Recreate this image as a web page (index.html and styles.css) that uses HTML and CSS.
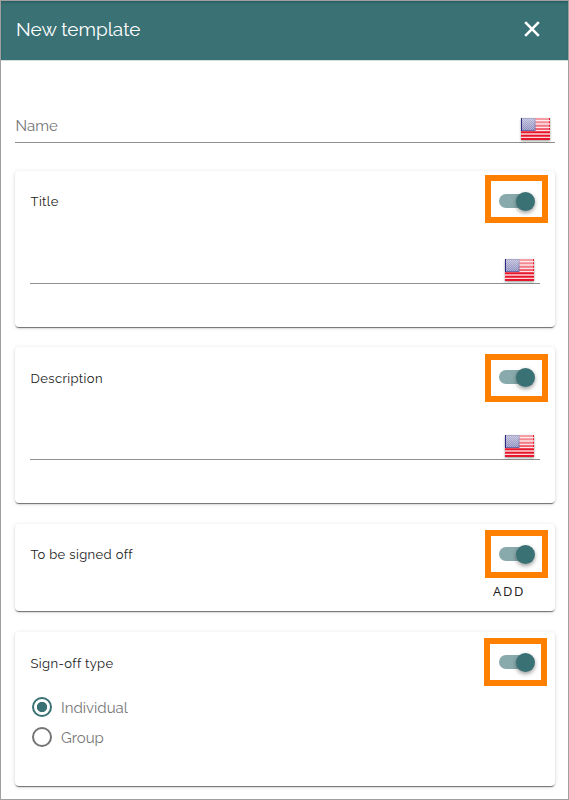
FILE: index.html
```
<!DOCTYPE html>
<html lang="en">
<head>
<meta charset="utf-8">
<title>New template</title>
<link rel="stylesheet" href="styles.css">
</head>
<body>
<svg width="0" height="0" class="defs" aria-hidden="true">
  <defs>
    <linearGradient id="shine" x1="0" y1="0" x2="0" y2="1"><stop offset="0" stop-color="#fff" stop-opacity=".6"/><stop offset=".6" stop-color="#fff" stop-opacity=".3"/><stop offset=".61" stop-color="#fff" stop-opacity="0"/></linearGradient>
    <pattern id="stars" width="2" height="2" patternUnits="userSpaceOnUse"><path fill="#c8c8e8" d="M0 0h1v1H0zM1 1h1v1H1z" opacity=".45"/></pattern>
    <symbol id="flag" viewBox="0 0 29 22">
      <path fill="#fbd5da" d="M0 0h29v22H0z"/>
      <path stroke="#e8162b" stroke-width="2" d="M0 1h29M0 4.3h29M0 7.7h29M0 11h29M0 14.3h29M0 17.7h29M0 21h29"/>
      <path fill="#2b2b85" d="M0 0h14.5v13H0z"/>
      <path fill="#55559f" d="M1 1h12.5v11H1z"/>
      <path fill="url(#stars)" d="M1 1h12.5v11H1z"/>
      <path fill="url(#shine)" d="M1 0h27v21H1z"/>
    </symbol>
  </defs>
</svg>
<div class="dialog">
  <header class="bar">
    <h1>New template</h1>
    <svg class="close" width="16" height="16" viewBox="0 0 16 16"><path d="M1.2 1.2 14.8 14.8M14.8 1.2 1.2 14.8" stroke="#fff" stroke-width="2.6"/></svg>
  </header>
  <main>
    <div class="field name"><label>Name</label><svg class="flag"><use href="#flag"/></svg></div>
    <section class="card tall">
      <div class="head"><h2>Title</h2><span class="toggle first"></span></div>
      <div class="field"><svg class="flag"><use href="#flag"/></svg></div>
    </section>
    <section class="card tall">
      <div class="head"><h2 class="low">Description</h2><span class="toggle second"></span></div>
      <div class="field"><svg class="flag"><use href="#flag"/></svg></div>
    </section>
    <section class="card short">
      <div class="head"><h2>To be signed off</h2><span class="toggle"></span></div>
      <button class="add">ADD</button>
    </section>
    <section class="card type">
      <div class="head"><h2 class="low">Sign-off type</h2><span class="toggle last"></span></div>
      <div class="options">
        <div class="option on"><i></i><span>Individual</span></div>
        <div class="option"><i></i><span>Group</span></div>
      </div>
    </section>
  </main>
</div>
</body>
</html>
```
FILE: styles.css
```
*, *::before, *::after { box-sizing: border-box; }
body { margin: 0; background: #fff; font-family: Raleway, Lato, "Open Sans", sans-serif; }
.defs { position: absolute; }
.dialog { height: 800px; border: 1px solid #a0a0a0; overflow: hidden; }
.bar { height: 60px; display: flex; align-items: center; justify-content: space-between; padding: 0 28px 3px 15px; background: #397175; box-shadow: inset 0 2px 3px -1px #28575a; border-bottom: 1px solid #d5dddd; }
h1 { margin: 0; color: #fff; font-size: 19px; font-weight: 400; }
.close { display: block; }
main { padding: 0 13px 0 14px; }
.field { display: flex; justify-content: flex-end; align-items: flex-start; height: 26px; border-bottom: 1px solid #8f8f8f; padding-right: 5px; }
.name { margin-top: 56px; }
.name label { flex: 1; padding-left: .5px; color: #747474; font-size: 15px; line-height: 18px; }
.flag { width: 29px; height: 22px; margin: 1px 1px 0 0; filter: drop-shadow(0 1px 1px rgba(0,0,0,.4)); }
.name .flag { margin-right: 0; }
.card { border-radius: 4px; padding: 21px 15px 0; background: #fff; box-shadow: 0 2px 1px -1px rgba(0,0,0,.4), 0 1px 1px rgba(0,0,0,.2), 0 1px 4px rgba(0,0,0,.15); }
.tall { height: 156px; margin-bottom: 20px; }
.name + .card { margin-top: 28px; }
.tall .field { margin-top: 46px; }
.short { height: 87px; margin: 21px 0; }
.type { height: 154px; }
.head { position: relative; display: flex; justify-content: space-between; align-items: flex-start; height: 20px; padding-right: 5px; }
h2 { margin: 0; padding-left: .6px; color: #222; font-size: 13px; font-weight: 400; line-height: 20px; letter-spacing: .37px; }
.low { padding-top: 1px; }
.toggle { position: relative; width: 36px; height: 19px; display: flex; align-items: center; justify-content: flex-end; }
.toggle::before { content: ""; position: absolute; left: 0; top: 2px; width: 34px; height: 14px; border-radius: 7px; background: #88aaac; }
.toggle::after { content: ""; position: relative; width: 19px; height: 19px; border-radius: 50%; background: #397175; box-shadow: 0 2px 4px rgba(0,0,0,.4); }
.head::after { content: ""; position: absolute; right: -8px; top: -15px; width: 63px; height: 48px; border: 6px solid #ff8000; }
.head:has(.first)::after { top: -17px; }
.head:has(.second)::after { top: -14px; }
.head:has(.last)::after { right: -7px; }
.add { display: block; margin: 17px 15px 0 auto; padding: 0; border: 0; background: none; color: #222; font: 13px/18px "Open Sans", sans-serif; letter-spacing: 1.6px; }
.options { padding: 19px 0 0 2px; }
.option { display: flex; align-items: center; height: 30px; color: #777; font-size: 15px; }
.option i { width: 20px; height: 20px; margin-right: 9px; border: 2px solid #747474; border-radius: 50%; }
.option span { padding-top: 1px; }
.option.on i { border-color: #397175; background: radial-gradient(circle, #397175 4.8px, transparent 5.5px); }
```
